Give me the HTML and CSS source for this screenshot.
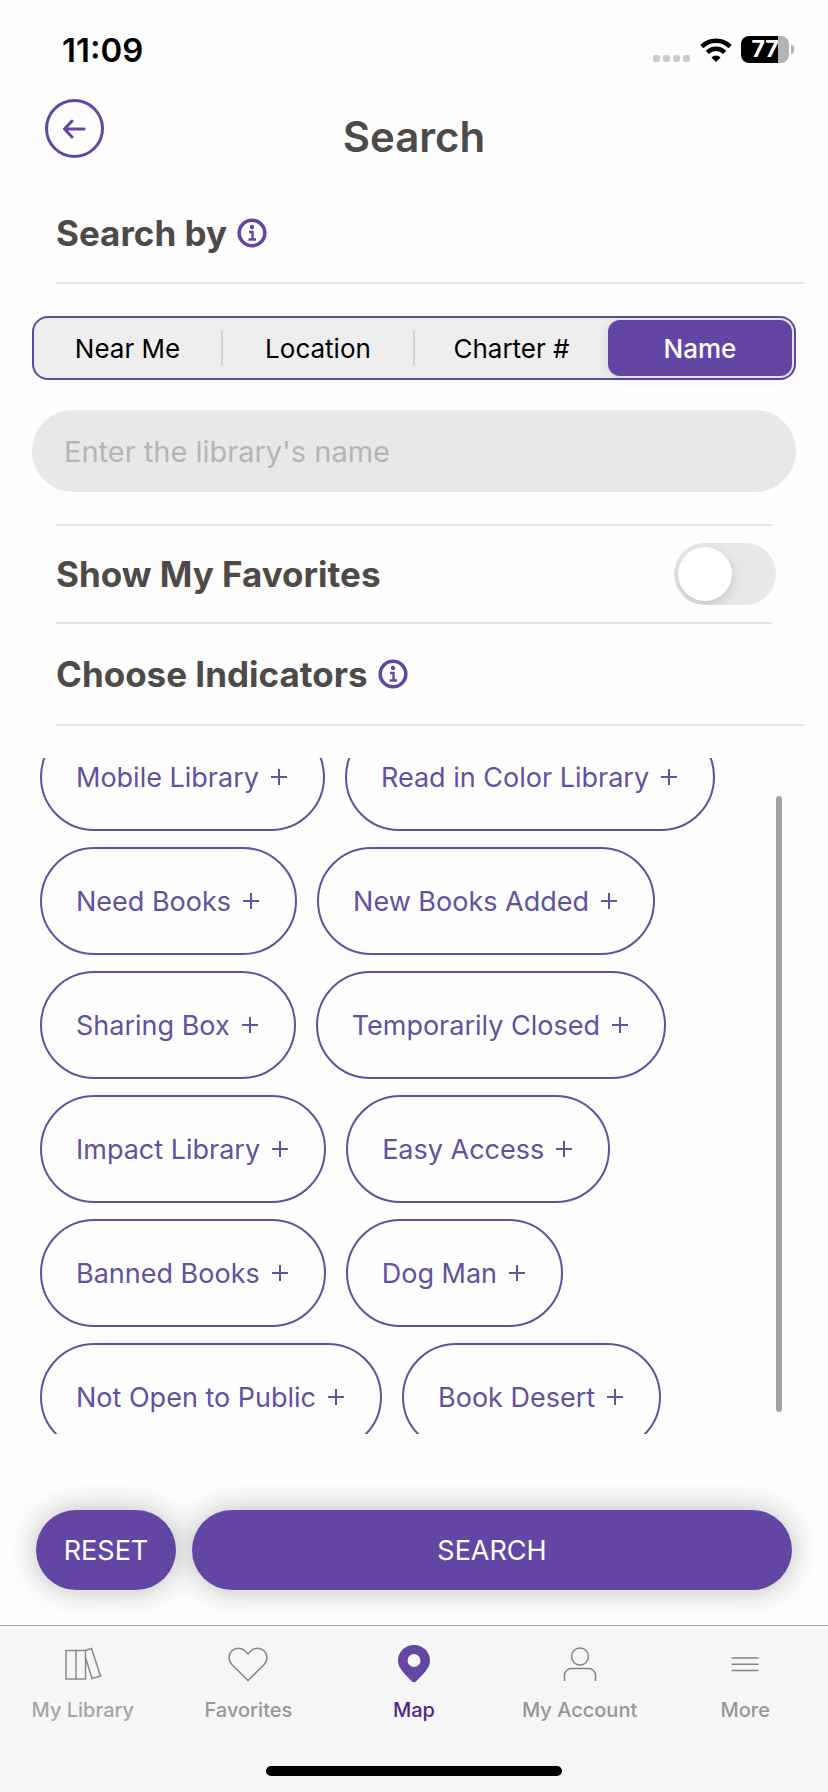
FILE: index.html
```html
<!DOCTYPE html>
<html lang="en">
<head>
    <meta charset="UTF-8">
    <meta name="viewport" content="width=device-width, initial-scale=1.0">
    <title>Search</title>
    <link rel="stylesheet" href="styles.css">
</head>
<body>
    <div class="status-bar">
        <span class="time">11:09</span>
        <div class="status-icons">
            <svg class="signal" width="38" height="8" viewBox="0 0 38 8" fill="#cbcbcb">
                <rect x="0" y="0" width="7" height="7" rx="2"/>
                <rect x="10" y="0" width="7" height="7" rx="2"/>
                <rect x="20" y="0" width="7" height="7" rx="2"/>
                <rect x="30" y="0" width="7" height="7" rx="2"/>
            </svg>
            <svg width="32" height="24" viewBox="0 0 32 24" fill="none" stroke="#000" stroke-width="4.6">
                <path d="M1.8 8.6a20.3 20.3 0 0 1 28.4 0"/>
                <path d="M7.3 14.3a12.4 12.4 0 0 1 17.4 0"/>
                <path d="M16 24l-4.6-4.6a6.6 6.6 0 0 1 9.2 0z" fill="#000" stroke="none"/>
            </svg>
            <div class="battery"><span class="battery-level">77</span></div>
        </div>
    </div>

    <header class="header">
        <button type="button" class="back-button" aria-label="Back">
            <svg width="24" height="20" viewBox="0 0 24 20" fill="none" stroke="#6346a4" stroke-width="3" stroke-linecap="round" stroke-linejoin="round">
                <path d="M21 10H2M9 2L1.500 10l7.500 8"/>
            </svg>
        </button>
        <h1>Search</h1>
    </header>

    <main>
        <div class="section-title">
            <h2>Search by</h2>
            <button type="button" class="info-button" aria-label="About search">
                <svg width="30" height="30" viewBox="0 0 30 30" fill="none" stroke="#6346a4">
                    <circle cx="15" cy="15" r="12.8" stroke-width="3.6"/>
                    <circle cx="15" cy="9" r="2.2" fill="#6346a4" stroke="none"/>
                    <path d="M12 14h3.5v7.5M11.5 21.5h7.5" stroke-width="2.4"/>
                </svg>
            </button>
        </div>
        <hr class="divider">

        <form id="searchForm" class="search-form">
            <div class="segments" role="radiogroup" aria-label="Search by">
                <label class="segment"><input type="radio" name="searchBy" value="near"><span>Near Me</span></label>
                <label class="segment"><input type="radio" name="searchBy" value="location"><span>Location</span></label>
                <label class="segment"><input type="radio" name="searchBy" value="charter"><span>Charter #</span></label>
                <label class="segment"><input type="radio" name="searchBy" value="name" checked><span>Name</span></label>
            </div>
            <input type="text" class="search-input" name="libraryName" aria-label="Library name" placeholder="Enter the library's name">
        </form>

        <hr class="divider short">
        <div class="section-title favorites">
            <h2><label for="favorites">Show My Favorites</label></h2>
            <input type="checkbox" id="favorites" class="toggle">
        </div>
        <hr class="divider short">

        <div class="section-title indicators-title">
            <h2>Choose Indicators</h2>
            <button type="button" class="info-button" aria-label="About indicators">
                <svg width="30" height="30" viewBox="0 0 30 30" fill="none" stroke="#6346a4">
                    <circle cx="15" cy="15" r="12.8" stroke-width="3.6"/>
                    <circle cx="15" cy="9" r="2.2" fill="#6346a4" stroke="none"/>
                    <path d="M12 14h3.5v7.5M11.5 21.5h7.5" stroke-width="2.4"/>
                </svg>
            </button>
        </div>
        <hr class="divider">

        <div class="indicators">
            <div class="chips">
                <button type="button" class="chip">Mobile Library <span class="plus"></span></button>
                <button type="button" class="chip">Read in Color Library <span class="plus"></span></button>
                <button type="button" class="chip">Need Books <span class="plus"></span></button>
                <button type="button" class="chip">New Books Added <span class="plus"></span></button>
                <button type="button" class="chip">Sharing Box <span class="plus"></span></button>
                <button type="button" class="chip">Temporarily Closed <span class="plus"></span></button>
                <button type="button" class="chip">Impact Library <span class="plus"></span></button>
                <button type="button" class="chip">Easy Access <span class="plus"></span></button>
                <button type="button" class="chip">Banned Books <span class="plus"></span></button>
                <button type="button" class="chip">Dog Man <span class="plus"></span></button>
                <button type="button" class="chip">Not Open to Public <span class="plus"></span></button>
                <button type="button" class="chip">Book Desert <span class="plus"></span></button>
            </div>
            <div class="scroll-thumb"></div>
        </div>
    </main>

    <div class="actions">
        <button type="reset" form="searchForm" class="action">RESET</button>
        <button type="submit" form="searchForm" class="action search">SEARCH</button>
    </div>

    <nav class="tab-bar">
        <div class="tabs">
            <a href="#library" class="tab dim">
                <svg width="40" height="40" viewBox="0 0 40 40" fill="none" stroke="#8a8a8a" stroke-width="1.5">
                    <path d="M3 6.500h19.500v28.500H3zM13 6.500v28.500M22.500 6.500l6-2 9 27.500-8.500 2.500-6.500-21"/>
                </svg>
                My Library
            </a>
            <a href="#favorites" class="tab">
                <svg width="40" height="40" viewBox="0 0 40 40" fill="none" stroke="#858585" stroke-width="1.5">
                    <path d="M20 36.500L3.800 20.500a9.800 9.800 0 0 1 0-13.500 9.400 9.400 0 0 1 13.400 0L20 10l2.800-3a9.400 9.400 0 0 1 13.400 0 9.800 9.800 0 0 1 0 13.500z"/>
                </svg>
                Favorites
            </a>
            <a href="#map" class="tab active" aria-current="page">
                <svg width="40" height="40" viewBox="0 0 40 40" fill="#6346a4" fill-rule="evenodd">
                    <path d="M20 1C10.800 1 4 8 4 16.800 4 23 8 27.500 17.500 37q2.500 2.500 5 0C32 27.500 36 23 36 16.800 36 8 29.200 1 20 1zM20 10a6.500 6.500 0 1 1 0 13 6.500 6.500 0 0 1 0-13z"/>
                </svg>
                Map
            </a>
            <a href="#account" class="tab">
                <svg width="40" height="40" viewBox="0 0 40 40" fill="none" stroke="#858585" stroke-width="1.5">
                    <circle cx="20" cy="12.5" r="8.5"/>
                    <path d="M4.500 37v-5.500a7 7 0 0 1 7-7h17a7 7 0 0 1 7 7V37"/>
                </svg>
                My Account
            </a>
            <a href="#more" class="tab">
                <svg width="40" height="40" viewBox="0 0 40 40" fill="none" stroke="#858585" stroke-width="1.5">
                    <path d="M6.500 14h27M6.500 20.300h27M6.500 26.600h27"/>
                </svg>
                More
            </a>
        </div>
        <div class="home-indicator"></div>
    </nav>
</body>
</html>
```

FILE: styles.css
```css
* {
    box-sizing: border-box;
}
body {
    font-family: Inter, "Liberation Sans", sans-serif;
    margin: 0;
    height: 100vh;
    display: flex;
    flex-direction: column;
    background-color: #fefefe;
    color: #4d4a48;
}
button,
input {
    font-family: inherit;
}
button {
    padding: 0;
    border: none;
    background: none;
    cursor: pointer;
}
svg {
    display: block;
}
.status-bar {
    display: flex;
    justify-content: space-between;
    align-items: center;
    height: 99px;
    padding: 0 34px 0 62px;
}
.time {
    font-size: 33px;
    font-weight: 600;
    color: #000;
}
.status-icons {
    display: flex;
    align-items: center;
    gap: 9px;
}
.signal {
    align-self: flex-end;
}
.battery {
    position: relative;
    width: 48px;
    margin-right: 5px;
    border-radius: 8px;
    background: linear-gradient(to right, #000 77%, #b3b3b3 77%);
}
.battery::after {
    content: "";
    position: absolute;
    top: 9px;
    right: -5px;
    width: 3px;
    height: 9px;
    border-radius: 0 4px 4px 0;
    background-color: #b3b3b3;
}
.battery-level {
    display: block;
    font-size: 23px;
    font-weight: 700;
    line-height: 27px;
    text-align: center;
    color: #fff;
}
.header {
    display: grid;
    grid-template-columns: 60px 1fr 60px;
    align-items: start;
    height: 85px;
    padding: 0 45px;
}
.back-button {
    display: flex;
    justify-content: center;
    align-items: center;
    width: 59px;
    height: 59px;
    border: 3px solid #6346a4;
    border-radius: 50%;
}
h1 {
    margin: 0;
    font-size: 42px;
    font-weight: 600;
    line-height: 76px;
    text-align: center;
}
main {
    flex: 1;
    min-height: 0;
    display: flex;
    flex-direction: column;
}
.section-title {
    display: flex;
    align-items: center;
    gap: 10px;
    height: 98px;
    flex-shrink: 0;
    padding: 0 52px 0 56px;
}
.favorites {
    justify-content: space-between;
    height: 96px;
}
.indicators-title {
    height: 100px;
}
h2 {
    margin: 0;
    font-size: 35px;
    font-weight: 700;
}
.divider {
    flex-shrink: 0;
    height: 2px;
    margin: 0 24px 0 56px;
    border: none;
    background-color: #e3e3e3;
}
.divider.short {
    margin-right: 56px;
}
.search-form {
    padding: 32px;
}
.segments {
    display: grid;
    grid-template-columns: 187fr 192fr 195fr 184fr;
    height: 64px;
    margin-bottom: 30px;
    padding: 2px 2px 2px 0;
    border: 2px solid #6346a4;
    border-radius: 16px;
    background-color: #eee;
}
.segment {
    position: relative;
    display: flex;
}
.segment input {
    position: absolute;
    opacity: 0;
}
.segment span {
    flex: 1;
    display: flex;
    justify-content: center;
    align-items: center;
    border-radius: 12px;
    font-size: 26px;
    color: #000;
    cursor: pointer;
}
.segment input:checked + span {
    background-color: #6346a4;
    box-shadow: 0 2px 12px rgba(0, 0, 0, 0.12);
    font-weight: 500;
    color: #fff;
}
.segment:nth-child(2)::before,
.segment:nth-child(3)::before {
    content: "";
    align-self: center;
    width: 2px;
    height: 36px;
    background-color: #d4d4d4;
}
.search-input {
    display: block;
    width: 100%;
    height: 82px;
    padding: 0 32px;
    border: none;
    border-radius: 41px;
    background-color: #e8e8e8;
    font-size: 29px;
    color: #4d4a48;
}
.search-input::placeholder {
    color: #b5b5b5;
}
.toggle {
    appearance: none;
    width: 102px;
    height: 62px;
    margin: 0;
    padding: 4px;
    border-radius: 31px;
    background-color: #e8e8e8;
    overflow: hidden;
    cursor: pointer;
}
.toggle::before {
    content: "";
    display: block;
    width: 54px;
    height: 54px;
    border-radius: 50%;
    background-color: #fff;
    box-shadow: 0 4px 12px rgba(0, 0, 0, 0.16);
}
.toggle:checked {
    background-color: #6346a4;
}
.toggle:checked::before {
    margin-left: 40px;
}
.indicators {
    position: relative;
    flex: 1;
    min-height: 0;
    margin-top: 32px;
    padding: 0 60px 0 40px;
    overflow: hidden;
}
/* list is scrolled down a little */
.chips {
    display: flex;
    flex-wrap: wrap;
    gap: 16px 20px;
    margin-top: -35px;
}
.chip {
    display: flex;
    align-items: center;
    gap: 12px;
    height: 108px;
    padding: 0 36px 0 34px;
    border: 2px solid #6350a0;
    border-radius: 54px;
    font-size: 27px;
    color: #6350a0;
}
.plus {
    width: 16px;
    height: 16px;
    background:
        linear-gradient(#6350a0, #6350a0) center / 16px 2px no-repeat,
        linear-gradient(#6350a0, #6350a0) center / 2px 16px no-repeat;
}
.scroll-thumb {
    position: absolute;
    top: 38px;
    right: 46px;
    bottom: 22px;
    width: 6px;
    border-radius: 3px;
    background-color: #a3a3a3;
}
.actions {
    display: flex;
    gap: 16px;
    padding: 76px 36px 35px;
}
.action {
    width: 140px;
    height: 80px;
    border-radius: 40px;
    background-color: #6346a4;
    box-shadow: 0 0 30px rgba(0, 0, 0, 0.28);
    font-size: 27px;
    color: #fff;
}
.action.search {
    flex: 1;
}
.tab-bar {
    padding: 18px 0 16px;
    border-top: 1px solid #a9a9a9;
    background-color: #f6f6f6;
}
.tabs {
    display: grid;
    grid-template-columns: repeat(5, 1fr);
    margin-bottom: 44px;
}
.tab {
    display: flex;
    flex-direction: column;
    align-items: center;
    gap: 14px;
    font-size: 20px;
    font-weight: 500;
    line-height: 24px;
    text-decoration: none;
    color: #969696;
}
.tab.dim {
    color: #a6a6a6;
}
.tab.active {
    color: #4b2a87;
}
.home-indicator {
    width: 296px;
    height: 10px;
    margin: 0 auto;
    border-radius: 5px;
    background-color: #000;
}
```
